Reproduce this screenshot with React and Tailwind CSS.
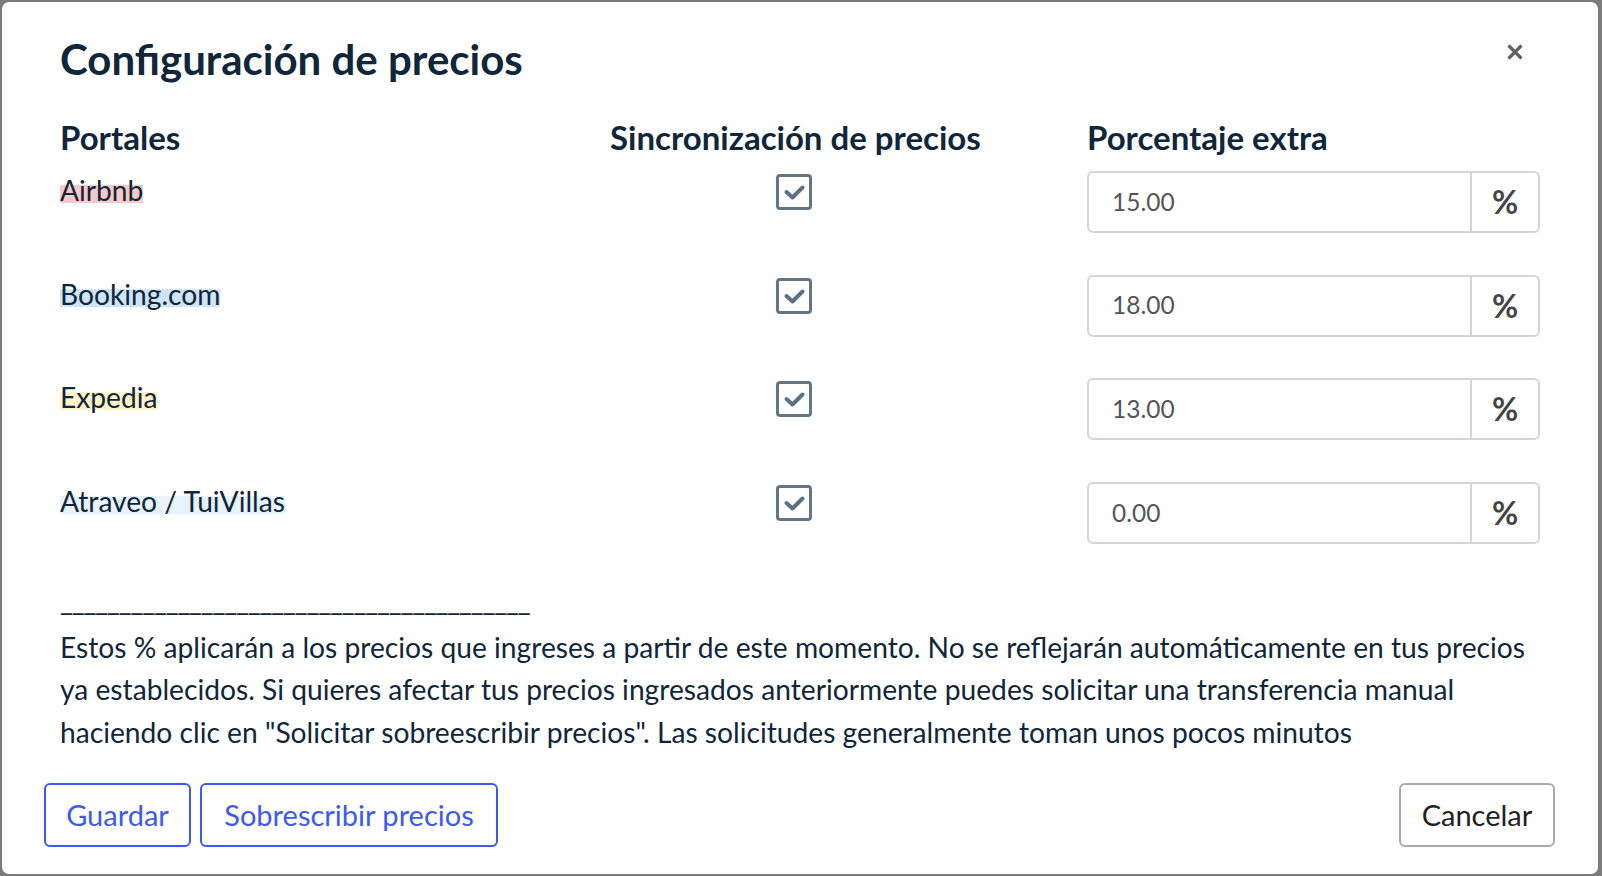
const L1 = "Estos % aplicarán a los precios que ingreses a partir de este momento. No se reflejarán automáticamente en tus precios";
const L2 = "ya establecidos. Si quieres afectar tus precios ingresados anteriormente puedes solicitar una transferencia manual";
const L3 = 'haciendo clic en "Solicitar sobreescribir precios". Las solicitudes generalmente toman unos pocos minutos';

const rows = [
  { name: "Airbnb", bg: "bg-[#f8c9c9]", value: "15.00" },
  { name: "Booking.com", bg: "bg-[#cfe5f6]", value: "18.00" },
  { name: "Expedia", bg: "bg-[#fdf3c9]", value: "13.00" },
  { name: "Atraveo / TuiVillas", bg: "bg-[#e7f2fb]", value: "0.00" },
];

function Check() {
  return (
    <div className="flex h-[36px] w-[36px] items-center justify-center rounded-[4px] border-[3px] border-[#617686] bg-white">
      <svg width="30" height="30" viewBox="0 0 30 30">
        <path d="M7.5 15 L13.5 20.5 L23.5 10.5" fill="none" stroke="#5c7182" strokeWidth="4" strokeLinecap="round" strokeLinejoin="round" />
      </svg>
    </div>
  );
}

export default function App() {
  return (
    <div className="relative h-[876px] w-[1602px] bg-[#7b7b7b] py-[2px] pl-[2px] pr-[4px] font-[Lato,sans-serif] text-[#10263a]">
      <div className="relative flex h-full flex-col rounded-[7px] bg-white">
        <button className="absolute right-[75px] top-[42px] flex h-[16px] w-[16px] items-center justify-center">
          <svg width="16" height="16" viewBox="0 0 16 16">
            <path d="M1.5 1.5 L14.5 14.5 M14.5 1.5 L1.5 14.5" stroke="#616161" strokeWidth="3.2" />
          </svg>
        </button>

        <div className="pl-[58px] pt-[32px]">
          <h2 className="text-[42px] font-bold leading-[50px]">Configuración de precios</h2>
        </div>

        <div className="mt-[32.5px] grid grid-cols-[550px_477px_453px] pl-[58px] text-[33px] font-bold leading-[40px]">
          <div>Portales</div>
          <div>Sincronización de precios</div>
          <div>Porcentaje extra</div>
        </div>

        <div className="mt-[14.5px] flex flex-col gap-y-[41.67px] pl-[58px]">
          {rows.map((r) => (
            <div key={r.name} className="grid h-[62px] grid-cols-[550px_477px_453px]">
              <div className="flex items-start pt-[14px]">
                <span className={`h-[18px] text-[28.2px] leading-[11px] ${r.bg}`}>{r.name}</span>
              </div>
              <div className="pl-[166px] pt-[3px]">
                <Check />
              </div>
              <div className="flex h-[62px] rounded-[6px] border-2 border-[#d2d6da]">
                <div className="flex flex-1 items-center pl-[23px] text-[24.5px] text-[#555555]">{r.value}</div>
                <div className="flex w-[68px] items-center justify-center border-l-2 border-[#d2d6da] text-[32px] font-bold text-[#454545]">
                  %
                </div>
              </div>
            </div>
          ))}
        </div>

        <div className="mt-[39.5px] pl-[58px] text-[28.2px]">
          <div className="whitespace-nowrap leading-[34.5px] tracking-[-1.2px]">
            ________________________________________
          </div>
          <p className="mt-[8px] whitespace-nowrap leading-[42.5px]">
            {L1}
            <br />
            {L2}
            <br />
            {L3}
          </p>
        </div>

        <div className="mt-[29.5px] flex justify-between pb-[27px] pl-[42px] pr-[43px] text-[29px]">
          <div className="flex gap-[9px]">
            <button className="h-[64px] w-[147px] rounded-[6px] border-2 border-[#3d59f2] text-[#3d59f2]">Guardar</button>
            <button className="h-[64px] w-[298px] rounded-[6px] border-2 border-[#3d59f2] text-[#3d59f2]">Sobrescribir precios</button>
          </div>
          <button className="h-[64px] w-[156px] rounded-[6px] border-2 border-[#aaaaaa] text-[#222222]">Cancelar</button>
        </div>
      </div>
    </div>
  );
}
